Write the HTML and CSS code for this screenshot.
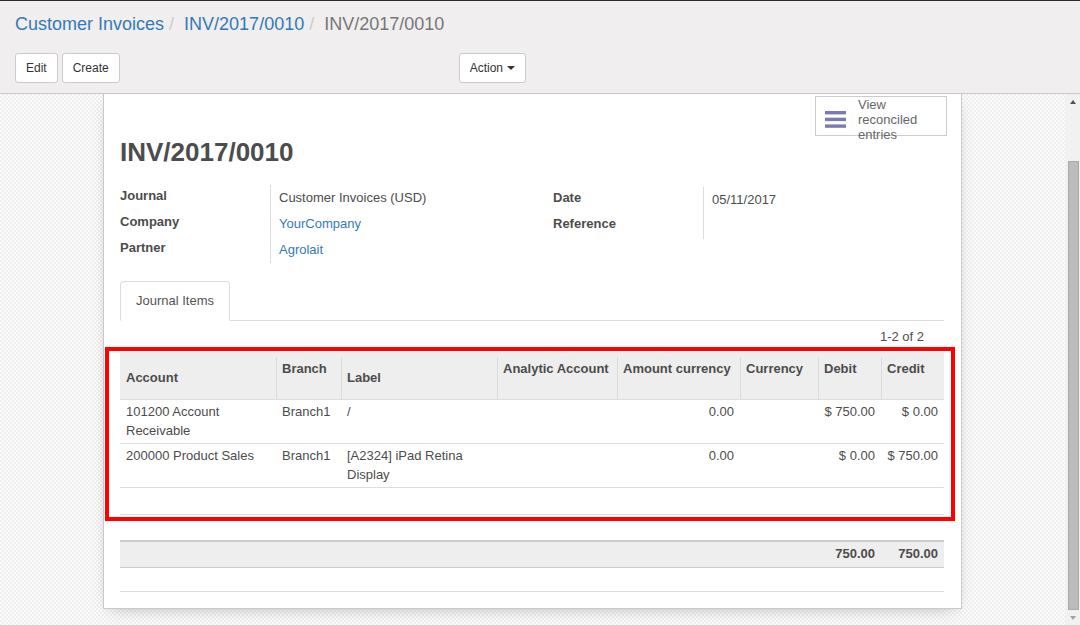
FILE: index.html
```html
<!DOCTYPE html>
<html>
<head>
<meta charset="utf-8">
<title>INV/2017/0010</title>
<link rel="stylesheet" href="styles.css">
</head>
<body>
<div class="control-panel">
  <ol class="breadcrumb">
    <li><a class="crumb-link">Customer Invoices</a></li>
    <li><a class="crumb-link">INV/2017/0010</a></li>
    <li class="crumb-active">INV/2017/0010</li>
  </ol>
  <div class="cp-row">
    <div class="cp-left">
      <div class="cp-buttons">
        <button class="btn">Edit</button>
        <button class="btn">Create</button>
      </div>
      <div class="cp-sidebar">
        <button class="btn">Action<span class="caret"></span></button>
      </div>
    </div>
  </div>
</div>

<div class="main">
  <div class="view">
    <div class="sheet">
      <div class="button-box">
        <div class="stat-btn">
          <svg class="stat-icon" width="21" height="17" viewBox="0 0 21 17">
            <rect x="0" y="0" width="21" height="3.4" fill="#7c7bad"/>
            <rect x="0" y="6.7" width="21" height="3.4" fill="#7c7bad"/>
            <rect x="0" y="13.4" width="21" height="3.4" fill="#7c7bad"/>
          </svg>
          <div class="stat-text">View<br>reconciled<br>entries</div>
        </div>
      </div>

      <h1 class="title">INV/2017/0010</h1>

      <div class="groups">
        <div class="group">
          <div class="labels">
            <div>Journal</div>
            <div>Company</div>
            <div>Partner</div>
          </div>
          <div class="values">
            <div>Customer Invoices (USD)</div>
            <div><a class="link">YourCompany</a></div>
            <div><a class="link">Agrolait</a></div>
          </div>
        </div>
        <div class="group group-right">
          <div class="labels">
            <div>Date</div>
            <div>Reference</div>
          </div>
          <div class="values values-right">
            <div>05/11/2017</div>
            <div>&nbsp;</div>
          </div>
        </div>
      </div>

      <div class="tabs">
        <div class="tab">Journal Items</div>
      </div>

      <div class="pager">1-2 of 2</div>

      <div class="highlight">
        <table class="list">
          <colgroup>
            <col style="width:156px"><col style="width:65px"><col style="width:156px"><col style="width:120px">
            <col style="width:123px"><col style="width:78px"><col style="width:63px"><col style="width:63px">
          </colgroup>
          <thead>
            <tr>
              <th class="low">Account</th>
              <th>Branch</th>
              <th class="low">Label</th>
              <th>Analytic Account</th>
              <th>Amount currency</th>
              <th>Currency</th>
              <th>Debit</th>
              <th>Credit</th>
            </tr>
          </thead>
          <tbody>
            <tr>
              <td>101200 Account Receivable</td>
              <td>Branch1</td>
              <td>/</td>
              <td></td>
              <td class="num">0.00</td>
              <td></td>
              <td class="num">$ 750.00</td>
              <td class="num">$ 0.00</td>
            </tr>
            <tr>
              <td>200000 Product Sales</td>
              <td>Branch1</td>
              <td>[A2324] iPad Retina Display</td>
              <td></td>
              <td class="num">0.00</td>
              <td></td>
              <td class="num">$ 0.00</td>
              <td class="num">$ 750.00</td>
            </tr>
            <tr class="empty">
              <td></td><td></td><td></td><td></td><td></td><td></td><td></td><td></td>
            </tr>
          </tbody>
        </table>
      </div>

      <table class="list totals">
        <colgroup>
          <col style="width:156px"><col style="width:65px"><col style="width:156px"><col style="width:120px">
          <col style="width:123px"><col style="width:78px"><col style="width:63px"><col style="width:63px">
        </colgroup>
        <tbody>
          <tr class="total-row">
            <td></td><td></td><td></td><td></td><td></td><td></td>
            <td class="num">750.00</td>
            <td class="num">750.00</td>
          </tr>
          <tr class="blank-row">
            <td></td><td></td><td></td><td></td><td></td><td></td><td></td><td></td>
          </tr>
        </tbody>
      </table>
    </div>
  </div>

  <div class="scrollbar">
    <div class="sb-btn"><span class="tri-up"></span></div>
    <div class="sb-track"><div class="sb-thumb"></div></div>
    <div class="sb-btn"><span class="tri-down"></span></div>
  </div>
</div>
</body>
</html>
```

FILE: styles.css
```css
html, body {
  margin: 0;
  padding: 0;
  height: 625px;
  overflow: hidden;
}

body {
  font-family: "Liberation Sans", Arial, Helvetica, sans-serif;
  font-size: 13px;
  color: #4c4c4c;
  background: #fff;
}

/* ---------- control panel ---------- */
.control-panel {
  background: #f0eeee;
  border-top: 1px solid #2b2b2b;
  border-bottom: 1px solid #c9c9c9;
  padding: 13px 15px 10px 15px;
}

.breadcrumb {
  list-style: none;
  margin: 0;
  padding: 0;
  display: flex;
  font-size: 18px;
  line-height: 20px;
  height: 20px;
}

.breadcrumb li + li::before {
  content: "/\00a0";
  padding: 0 5px;
  color: #ccc;
}

.crumb-link {
  color: #337ab7;
  text-decoration: none;
}

.crumb-active {
  color: #777;
}

.cp-row {
  margin-top: 19px;
  display: flex;
}

.cp-left {
  width: 525px;
  display: flex;
  justify-content: space-between;
  padding-right: 14px;
  box-sizing: border-box;
}

.cp-buttons {
  display: flex;
  gap: 4px;
}

.btn {
  font-family: "Liberation Sans", Arial, sans-serif;
  font-size: 12px;
  color: #333;
  background: #fff;
  border: 1px solid #ccc;
  border-radius: 3px;
  height: 30px;
  line-height: 28px;
  padding: 0 10px;
  margin: 0;
  display: flex;
  align-items: center;
}

.caret {
  display: inline-block;
  width: 0;
  height: 0;
  margin-left: 4px;
  border-top: 4px solid #333;
  border-left: 4px solid transparent;
  border-right: 4px solid transparent;
}

/* ---------- main area ---------- */
.main {
  display: flex;
  height: 531px;
}

.view {
  flex: 1;
  overflow: hidden;
  background-color: #f7f7f7;
  background-image: repeating-conic-gradient(#efefef 0% 25%, #fbfbfb 0% 50%);
  background-size: 4px 4px;
}

.sheet {
  width: 859px;
  box-sizing: border-box;
  margin: 0 auto;
  background: #fff;
  border: 1px solid #c8c8d0;
  border-top: none;
  padding: 0 17px 16px 16px;
  box-shadow: 0 5px 16px -8px rgba(0, 0, 0, 0.35);
}

.button-box {
  display: flex;
  justify-content: flex-end;
  padding-top: 2px;
  margin-right: -3px;
}

.stat-btn {
  width: 132px;
  height: 40px;
  box-sizing: border-box;
  border: 1px solid #ccc;
  display: flex;
  align-items: flex-start;
  padding: 0 0 0 9px;
}

.stat-icon {
  flex: none;
  margin-top: 14px;
  margin-right: 12px;
}

.stat-text {
  color: #666;
  line-height: 15px;
  font-size: 13px;
}

.title {
  margin: 0;
  font-size: 26px;
  line-height: 32px;
  font-weight: bold;
  color: #4c4c4c;
}

.groups {
  display: grid;
  grid-template-columns: 433px 1fr;
  margin-top: 15px;
}

.group {
  display: flex;
  align-items: flex-start;
}

.group-right {
  margin-top: 2px;
}

.labels {
  width: 150px;
  flex: none;
  line-height: 26px;
  font-weight: bold;
}

.values {
  border-left: 1px solid #ddd;
  padding-left: 8px;
  line-height: 26px;
  margin-top: 2px;
}

.link {
  color: #337ab7;
  text-decoration: none;
}

/* ---------- tabs ---------- */
.tabs {
  margin-top: 18px;
  border-bottom: 1px solid #ddd;
  display: flex;
}

.tab {
  border: 1px solid #ddd;
  border-bottom-color: #fff;
  border-radius: 4px 4px 0 0;
  padding: 10px 15px;
  line-height: 18px;
  margin-bottom: -1px;
  color: #555;
  background: #fff;
}

.pager {
  margin: 7px 20px 1px 0;
  line-height: 18px;
  text-align: right;
}

/* ---------- list ---------- */
.highlight {
  border: 4px solid #ff0000;
  margin: 0 -11px 0 -15px;
  padding: 1px 7px 2px 11px;
}

.list {
  width: 100%;
  border-collapse: collapse;
  table-layout: fixed;
}

.list th {
  background-color: #eee;
  background-image: linear-gradient(#dcdcdc, #dcdcdc);
  background-repeat: no-repeat;
  background-size: 1px 100%;
  background-position: 0 5px;
  font-weight: bold;
  text-align: left;
  white-space: nowrap;
  vertical-align: top;
  padding: 8px 6px 21px 6px;
  line-height: 18px;
  border-bottom: 1px solid #ddd;
}

.list th:first-child {
  background-image: none;
}

.list th.low {
  padding-top: 17px;
  padding-bottom: 12px;
}

.list td {
  padding: 3px 6px;
  line-height: 18.5px;
  vertical-align: top;
  border-bottom: 1px solid #ddd;
}

.list td.num {
  text-align: right;
}

.list tr.empty td {
  height: 20px;
  line-height: 20px;
}

.totals {
  margin-top: 19px;
}

.total-row td {
  background: #eee;
  border-top: 2px solid #ccc;
  border-bottom: 1px solid #ccc;
  font-weight: bold;
  padding: 3px 6px;
  line-height: 18.5px;
  height: 18.5px;
}

.blank-row td {
  height: 17px;
  border-bottom: 1px solid #ddd;
}

/* ---------- scrollbar ---------- */
.scrollbar {
  width: 15px;
  flex: none;
  background: #f1f1f1;
  display: flex;
  flex-direction: column;
}

.sb-btn {
  height: 15px;
  flex: none;
  display: flex;
  align-items: center;
  justify-content: center;
}

.tri-up {
  width: 0;
  height: 0;
  border-left: 3.5px solid transparent;
  border-right: 3.5px solid transparent;
  border-bottom: 4px solid #505050;
}

.tri-down {
  width: 0;
  height: 0;
  border-left: 3.5px solid transparent;
  border-right: 3.5px solid transparent;
  border-top: 4px solid #a3a3a3;
}

.sb-track {
  flex: 1;
  display: flex;
  padding: 52px 1px 0 3px;
}

.sb-thumb {
  flex: 1;
  background: #bcbcbc;
  border: 1px solid #a9a9a9;
}
```
